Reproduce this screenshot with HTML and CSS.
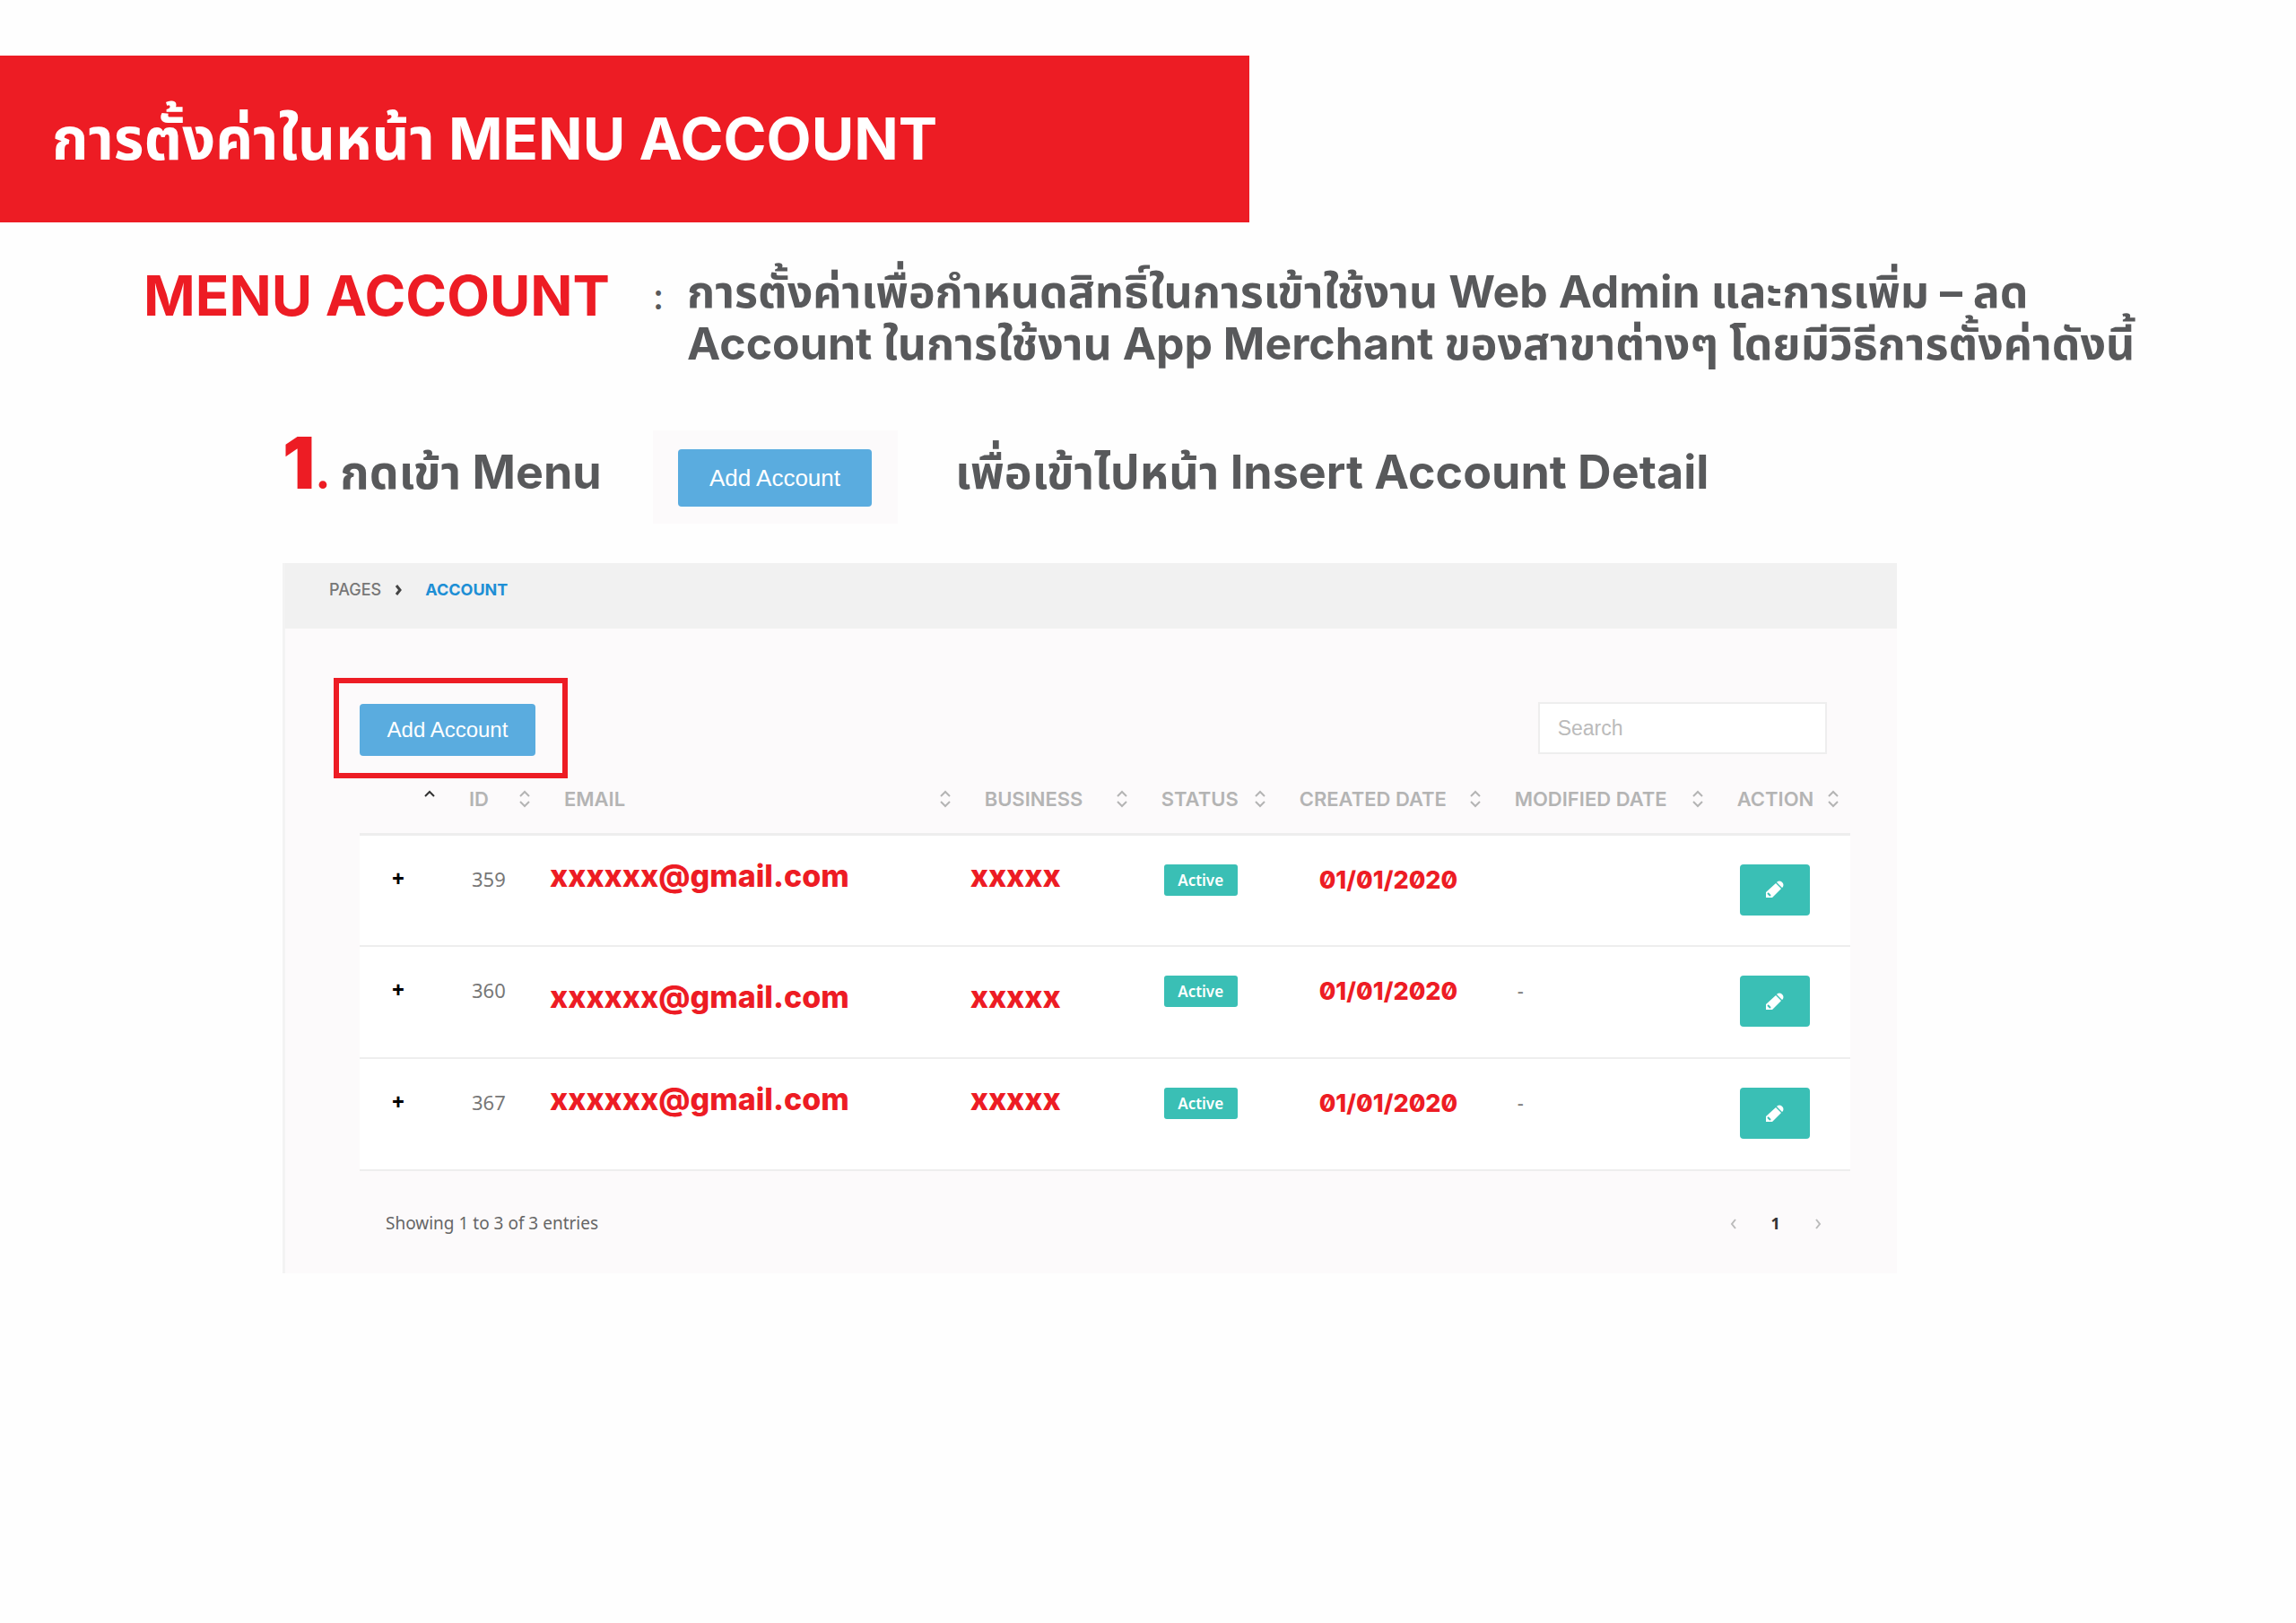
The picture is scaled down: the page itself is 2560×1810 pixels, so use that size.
FILE: index.html
```html
<!DOCTYPE html>
<html lang="th">
<head>
    <meta charset="UTF-8">
    <meta name="viewport" content="width=device-width, initial-scale=1.0">
    <title>Menu Account</title>
    <link rel="stylesheet" href="styles.css">
</head>
<body>
    <svg width="0" height="0" class="sprite" aria-hidden="true">
        <symbol id="sort" viewBox="0 0 14 20">
            <path d="M2 7l5-5 5 5M2 13l5 5 5-5" fill="none" stroke="currentColor" stroke-width="2"/>
        </symbol>
        <symbol id="pencil" viewBox="0 0 22 22">
            <path d="M12 4l6 6L8 20H1v-6zM13 3l1-1q2-1 4 0l2 2q1 2 0 4l-1 1z" fill="currentColor"/>
            <path d="M3 15l3 3" stroke="#3abfb5" stroke-width="2"/>
        </symbol>
    </svg>

    <header class="banner">
        <h1>การตั้งค่าในหน้า MENU ACCOUNT</h1>
    </header>

    <section class="intro">
        <h2>MENU ACCOUNT</h2>
        <span class="colon">:</span>
        <p>การตั้งค่าเพื่อกำหนดสิทธิ์ในการเข้าใช้งาน Web Admin และการเพิ่ม – ลด<br>
        Account ในการใช้งาน App Merchant ของสาขาต่างๆ โดยมีวิธีการตั้งค่าดังนี้</p>
    </section>

    <section class="step">
        <p class="step-menu"><span class="step-number">1</span><span class="step-dot">.</span> กดเข้า Menu</p>
        <div class="step-button">
            <button type="button" class="btn btn-large">Add Account</button>
        </div>
        <p>เพื่อเข้าไปหน้า Insert Account Detail</p>
    </section>

    <main class="panel">
        <nav class="breadcrumb">
            <a href="#">PAGES</a>
            <svg width="8" height="12" viewBox="0 0 8 12"><path d="M2 1l4 5-4 5" fill="none" stroke="#444" stroke-width="3"/></svg>
            <a href="#" class="current">ACCOUNT</a>
        </nav>

        <div class="content">
            <div class="toolbar">
                <div class="highlight">
                    <button type="button" class="btn">Add Account</button>
                </div>
                <input type="text" class="search" placeholder="Search" aria-label="Search">
            </div>

            <table>
                <colgroup>
                    <col class="col-toggle">
                    <col class="col-id">
                    <col>
                    <col class="col-business">
                    <col class="col-status">
                    <col class="col-created">
                    <col class="col-modified">
                    <col class="col-action">
                </colgroup>
                <thead>
                    <tr>
                        <th><div class="sorted"><svg width="14" height="20" viewBox="0 0 14 20"><path d="M2 7l5-5 5 5" fill="none" stroke="#333" stroke-width="2"/></svg></div></th>
                        <th><div>ID <svg width="14" height="20"><use href="#sort"/></svg></div></th>
                        <th><div>EMAIL <svg width="14" height="20"><use href="#sort"/></svg></div></th>
                        <th><div>BUSINESS <svg width="14" height="20"><use href="#sort"/></svg></div></th>
                        <th><div>STATUS <svg width="14" height="20"><use href="#sort"/></svg></div></th>
                        <th><div>CREATED DATE <svg width="14" height="20"><use href="#sort"/></svg></div></th>
                        <th><div>MODIFIED DATE <svg width="14" height="20"><use href="#sort"/></svg></div></th>
                        <th><div>ACTION <svg width="14" height="20"><use href="#sort"/></svg></div></th>
                    </tr>
                </thead>
                <tbody>
                    <tr>
                        <td class="toggle">+</td>
                        <td>359</td>
                        <td class="typed">xxxxxx@gmail.com</td>
                        <td class="typed">xxxxx</td>
                        <td><span class="badge">Active</span></td>
                        <td class="date">01/01/2020</td>
                        <td></td>
                        <td><button type="button" class="edit" aria-label="Edit"><svg width="22" height="22"><use href="#pencil"/></svg></button></td>
                    </tr>
                    <tr>
                        <td class="toggle">+</td>
                        <td>360</td>
                        <td class="typed typed-low">xxxxxx@gmail.com</td>
                        <td class="typed typed-low">xxxxx</td>
                        <td><span class="badge">Active</span></td>
                        <td class="date">01/01/2020</td>
                        <td>-</td>
                        <td><button type="button" class="edit" aria-label="Edit"><svg width="22" height="22"><use href="#pencil"/></svg></button></td>
                    </tr>
                    <tr>
                        <td class="toggle">+</td>
                        <td>367</td>
                        <td class="typed">xxxxxx@gmail.com</td>
                        <td class="typed">xxxxx</td>
                        <td><span class="badge">Active</span></td>
                        <td class="date">01/01/2020</td>
                        <td>-</td>
                        <td><button type="button" class="edit" aria-label="Edit"><svg width="22" height="22"><use href="#pencil"/></svg></button></td>
                    </tr>
                </tbody>
            </table>

            <footer class="table-footer">
                <span>Showing 1 to 3 of 3 entries</span>
                <div class="pagination">
                    <button type="button" aria-label="Previous page"><svg width="8" height="12" viewBox="0 0 8 12"><path d="M6 1L2 6l4 5" fill="none" stroke="#bbb" stroke-width="2"/></svg></button>
                    <button type="button">1</button>
                    <button type="button" aria-label="Next page"><svg width="8" height="12" viewBox="0 0 8 12"><path d="M2 1l4 5-4 5" fill="none" stroke="#bbb" stroke-width="2"/></svg></button>
                </div>
            </footer>
        </div>
    </main>
</body>
</html>
```
FILE: styles.css
```css
* {
    margin: 0;
    padding: 0;
    box-sizing: border-box;
}

body {
    font-family: Inter, "Noto Sans Thai", "Noto Sans", sans-serif;
    background: #fefefe;
    color: #58595b;
    padding-top: 62px;
}

.sprite {
    position: absolute;
}

button {
    border: none;
    font-family: inherit;
    cursor: pointer;
}

.banner {
    width: 54.4%;
    height: 186px;
    padding-left: 58px;
    background: #ed1c24;
    display: flex;
    align-items: center;
}

.banner h1 {
    color: #fff;
    font-size: 65px;
    font-weight: 700;
    line-height: 80px;
    white-space: nowrap;
}

.intro {
    display: flex;
    padding: 44px 100px 0 160px;
    font-size: 50px;
    font-weight: 700;
    line-height: 58px;
}

.intro h2 {
    color: #ed1c24;
    font-size: 62px;
    line-height: 76px;
    white-space: nowrap;
}

.colon {
    margin: 10px 26px 0 48px;
    font-size: 40px;
    font-weight: 500;
}

.intro p {
    white-space: nowrap;
    margin-top: 4px;
}

.step {
    display: flex;
    align-items: center;
    height: 104px;
    margin-top: 68px;
    padding-left: 315px;
    font-size: 52px;
    font-weight: 700;
    line-height: 80px;
}

.step p {
    padding-bottom: 10px;
    white-space: nowrap;
}

.step-menu {
    width: 413px;
}

.step-number {
    color: #ed1c24;
    font-size: 80px;
    font-weight: 900;
    line-height: 0;
}

.step-dot {
    color: #ed1c24;
}

.step-button {
    padding: 21px 29px 19px 28px;
    margin-right: 64px;
    background: #fcfafb;
}

.btn {
    display: block;
    width: 196px;
    height: 58px;
    border-radius: 4px;
    background: #5aacdf;
    color: #fff;
    font-family: "Liberation Sans", Arial, sans-serif;
    font-size: 24px;
}

.btn-large {
    width: 216px;
    height: 64px;
    font-size: 26px;
}

.panel {
    width: 70.3%;
    margin: 44px 0 0 315px;
    border-left: 3px solid #f3f3f3;
    background: #fcfafb;
}

.breadcrumb {
    display: flex;
    align-items: center;
    height: 73px;
    padding: 0 0 14px 49px;
    background: #f1f1f1;
    font-size: 18px;
}

.breadcrumb a {
    color: #777;
    font-weight: 500;
    text-decoration: none;
}

.breadcrumb svg {
    margin: 0 26px 0 15px;
}

.breadcrumb .current {
    color: #1e8fd5;
    font-weight: 700;
}

.content {
    padding: 55px 52px 40px 54px;
}

.toolbar {
    display: flex;
    justify-content: space-between;
    align-items: center;
    padding-right: 26px;
}

.highlight {
    padding: 23px 30px 19px 23px;
    border: 6px solid #ed1c24;
}

.search {
    width: 322px;
    height: 58px;
    padding: 0 20px;
    border: 2px solid #eee;
    background: #fff;
    font-family: "Liberation Sans", Arial, sans-serif;
    font-size: 23px;
}

.search::placeholder {
    color: #bbb;
}

table {
    width: calc(100% - 29px);
    margin-left: 29px;
    border-collapse: collapse;
    table-layout: fixed;
}

.col-toggle { width: 97px; }
.col-id { width: 106px; }
.col-business { width: 197px; }
.col-status { width: 154px; }
.col-created { width: 240px; }
.col-modified { width: 248px; }
.col-action { width: 151px; }

th {
    height: 62px;
    padding: 0 12px 14px 25px;
    border-bottom: 3px solid #eee;
    color: #b4b4b4;
    font-size: 22px;
    font-weight: 600;
    white-space: nowrap;
}

th div {
    display: flex;
    align-items: center;
    justify-content: space-between;
}

th .sorted {
    justify-content: flex-end;
}

td {
    height: 125px;
    padding: 32px 0 0 28px;
    border-bottom: 2px solid #eee;
    background: #fff;
    color: #777;
    font-family: "Noto Sans", "Open Sans", sans-serif;
    font-size: 22px;
    line-height: 32px;
    vertical-align: top;
}

td.toggle {
    padding-left: 36px;
    color: #000;
    font-size: 24px;
    font-weight: 800;
}

td.typed,
td.date {
    color: #ed1c24;
    font-family: Inter, sans-serif;
    font-weight: 800;
    white-space: nowrap;
}

td.typed {
    padding-top: 29px;
    padding-left: 9px;
    font-size: 34px;
}

td.typed-low {
    padding-top: 40px;
}

td.date {
    padding-top: 34px;
    padding-left: 47px;
    font-size: 27px;
    font-feature-settings: "zero";
}

.badge {
    display: block;
    width: 82px;
    height: 35px;
    border-radius: 3px;
    background: #3abfb5;
    color: #fff;
    font-size: 17px;
    font-weight: 600;
    line-height: 35px;
    text-align: center;
}

.edit {
    display: flex;
    align-items: center;
    justify-content: center;
    width: 78px;
    height: 57px;
    border-radius: 4px;
    background: #3abfb5;
    color: #fff;
}

.table-footer {
    display: flex;
    align-items: center;
    justify-content: space-between;
    padding: 42px 28px 0 58px;
    font-family: "Noto Sans", "Open Sans", sans-serif;
    font-size: 19px;
    line-height: 32px;
    color: #666;
}

.pagination {
    display: flex;
    gap: 31px;
}

.pagination button {
    background: none;
    width: 16px;
    color: #333;
    font-size: 18px;
    font-weight: 700;
}
```
